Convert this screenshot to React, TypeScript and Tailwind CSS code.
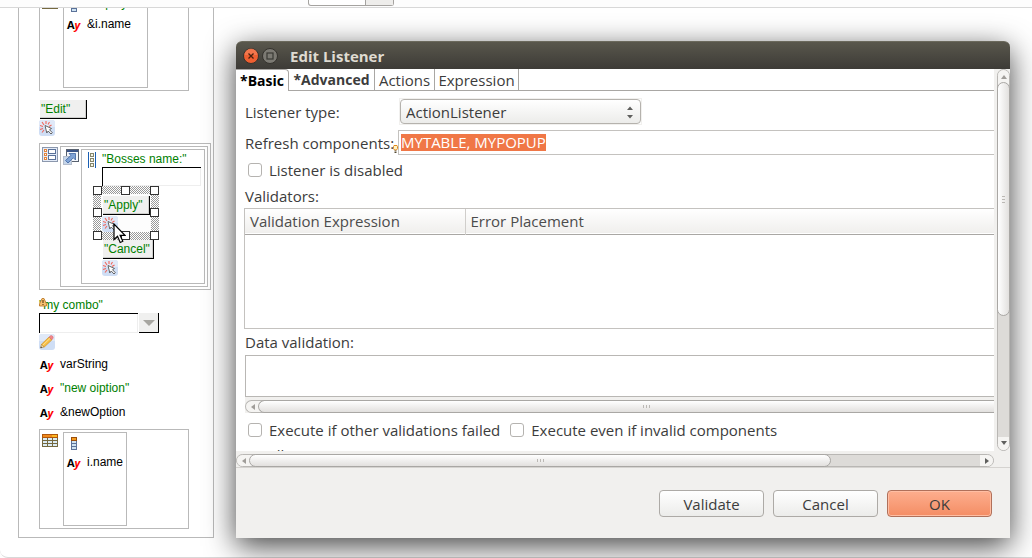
import React from "react";

const CANVAS_FONT = "font-['Liberation_Sans',Arial,sans-serif] text-[12px] leading-[15px]";
const DIALOG_FONT = "font-['Open_Sans','Noto_Sans',sans-serif] text-[15px] leading-[20px]";

/* ---------- icons ---------- */

const ActionIcon = () => (
  <svg width="16" height="16" viewBox="0 0 16 16" className="block shrink-0">
    <rect width="16" height="16" rx="3" fill="#cfdef5" />
    <path d="M0 3a3 3 0 0 1 3-3h10a3 3 0 0 1 3 3v4H0z" fill="#e0e9f8" />
    <path
      d="M7 1v3M3 2l2 3M10.500 2L9 4.500M1 5.500l3 1M12.500 5L10 6.500M1 9.500l3-1M3 12.500L5 10"
      stroke="#f0675c"
      strokeWidth="1.100"
      fill="none"
    />
    <path d="M6 5.500l6.500 3-2 1.200 2.800 3-1.300 1.300-2.800-3-1.400 2z" fill="#fff" stroke="#555" strokeWidth=".9" />
  </svg>
);

const PencilIcon = () => (
  <svg width="16" height="16" viewBox="0 0 16 16" className="block">
    <rect width="16" height="16" rx="3" fill="#cfdef5" />
    <path d="M0 3a3 3 0 0 1 3-3h10a3 3 0 0 1 3 3v4H0z" fill="#e0e9f8" />
    <path d="M1.500 14l1-3.800 2.800 2.800z" fill="#f4d9a8" stroke="#8a6a30" strokeWidth=".5" />
    <path d="M1.500 14l.5-1.600 1.200 1.200z" fill="#333" />
    <path d="M2.500 10.200L10 3l3 2.800L5.300 13z" fill="#f6bd45" stroke="#c98a20" strokeWidth=".6" />
    <path d="M3.800 11.300L11 4.400" stroke="#fde39a" strokeWidth="1" />
    <path d="M10 3l1.500-1.300q1-.6 2 .4 1 1 .6 2L13 5.800z" fill="#f2858a" stroke="#d0666c" strokeWidth=".5" />
  </svg>
);

const TableIcon = () => (
  <svg width="16" height="13" viewBox="0 0 16 13" className="block" shapeRendering="crispEdges">
    <rect width="16" height="13" fill="#75693f" />
    <rect width="16" height="4" fill="#b0560c" />
    <rect x="1" y="1" width="9" height="2" fill="#f08a1c" />
    <rect x="10" y="1" width="5" height="2" fill="#fbb823" />
    {[4, 7, 10].map((y) =>
      [1, 6, 11].map((x) => <rect key={`${x}-${y}`} x={x} y={y} width="4" height="2" fill="#dcecf5" />)
    )}
  </svg>
);

const ColumnIcon = () => (
  <svg width="6" height="13" viewBox="0 0 6 13" className="block" shapeRendering="crispEdges">
    <rect width="6" height="13" fill="#5b7299" />
    <rect width="6" height="4" fill="#9a4e0c" />
    <rect x="1" y="1" width="4" height="2" fill="#f59c1e" />
    {[4, 7, 10].map((y) => (
      <rect key={y} x="1" y={y} width="4" height="2" fill="#cfe3f2" />
    ))}
  </svg>
);

const FormIcon = () => (
  <svg width="16" height="15" viewBox="0 0 16 15" className="block" shapeRendering="crispEdges">
    <rect x=".5" y=".5" width="15" height="14" fill="#e3ebf8" stroke="#8c98ad" />
    {[2, 6, 10].map((y) => (
      <rect key={y} x="2.500" y={y + 0.5} width="2" height="2" fill="#fff" stroke="#e5843a" />
    ))}
    <rect x="6.500" y="2.500" width="7" height="4" fill="#fff" stroke="#5b7299" />
    <rect x="6.500" y="8.500" width="7" height="4" fill="#fff" stroke="#5b7299" />
  </svg>
);

const PopupIcon = () => (
  <svg width="16" height="16" viewBox="0 0 16 16" className="block">
    <rect x="3.500" y=".5" width="12" height="12" fill="#f4f7fc" stroke="#58616f" />
    <rect x="4" y="1" width="11" height="2" fill="#3a5488" />
    <rect x=".5" y="7.500" width="8" height="8" fill="#c5d5ea" stroke="#b3bccb" />
    <path d="M6 4.500h6.500V11l-2.200-2.200L5 14l-2.500-2.500L7.900 6.400z" fill="#7fa3d6" stroke="#3c639f" strokeWidth=".8" />
  </svg>
);

const LayoutIcon = () => (
  <svg width="8" height="16" viewBox="0 0 8 16" className="block" shapeRendering="crispEdges">
    <path d="M.5 0v16M7.500 0v16" stroke="#1a5fb4" />
    {[1, 6, 11].map((y) => (
      <rect key={y} x="2.500" y={y + 0.5} width="3" height="3" fill="#f4f4e6" stroke="#85866c" />
    ))}
  </svg>
);

const WarningIcon = () => (
  <svg width="8" height="9" viewBox="0 0 8 9" className="absolute left-0 top-0">
    <path d="M3 .5h2L7.500 6v2H.5V6z" fill="#f6c274" stroke="#b9721c" strokeWidth=".8" />
    <path d="M4 2v3M4 6v1" stroke="#4a2a00" strokeWidth="1" />
  </svg>
);

const BulbIcon = () => (
  <svg width="5" height="9" viewBox="0 0 5 9" className="absolute right-0 -bottom-px">
    <path d="M1 .5h3l.5 1v2L3.500 5h-2L.5 3.500v-2z" fill="#fff3c4" stroke="#e08a1e" />
    <path d="M1.500 6h2M1.500 7.500h2" stroke="#554a33" />
  </svg>
);

const CursorIcon = () => (
  <svg width="13" height="21" viewBox="0 0 13 21" className="absolute left-[20px] top-[37px]">
    <path d="M1 1v15.500l3.500-3.300 2.700 6.300 2.600-1.200-2.700-6H12z" fill="#fff" stroke="#000" strokeWidth="1.200" />
  </svg>
);

/* ---------- canvas pieces ---------- */

const Ay = () => (
  <span className="w-5 shrink-0 font-['Open_Sans',sans-serif] text-[11px] leading-[13px] font-bold text-black">
    A<i className="text-[#ff0000]">y</i>
  </span>
);

const TextRow = ({ text, green = false }: { text: string; green?: boolean }) => (
  <div className="flex h-6 items-center pl-px">
    <Ay />
    <span className={green ? "text-[#008000]" : "text-black"}>{text}</span>
  </div>
);

const CanvasButton = ({ label, className }: { label: string; className: string }) => (
  <div className="flex flex-col gap-px">
    <button
      className={`ml-px block h-[19px] border-r border-b border-black bg-[#f0f0ef] pl-px text-left text-[#008000] shadow-[inset_-1px_-1px_0_#cfcfcd] ${className}`}
    >
      {label}
    </button>
    <ActionIcon />
  </div>
);

const TableBox = ({ text, header, wide = false }: { text: string; header?: string; wide?: boolean }) => (
  <div className="flex h-[100px] w-[150px] gap-[5px] border border-[#b9b9b9] p-[2px]">
    <div className="pt-[2px]">
      <TableIcon />
    </div>
    <div className={`border border-[#b9b9b9] pl-[2px] pt-1 ${wide ? "w-[85px]" : "w-16"}`}>
      <div className="flex h-[13px] gap-[6px] pl-[5px]">
        <ColumnIcon />
        {header && <span className="leading-[9px] text-[#008000]">{header}</span>}
      </div>
      <TextRow text={text} />
    </div>
  </div>
);

const handles = [
  "left-0 top-0",
  "left-[28px] top-0",
  "right-0 top-0",
  "left-0 top-[22px]",
  "right-0 top-[22px]",
  "left-0 bottom-0",
  "left-[28px] bottom-0",
  "right-0 bottom-0",
];

const Selection = ({ children }: { children: React.ReactNode }) => (
  <div className="relative -ml-[9px] h-[54px] w-[66px] bg-[repeating-conic-gradient(#999_0_25%,#fff_0_50%)] bg-[length:2px_2px] p-2">
    <div className="h-full bg-[#fdfdfd] pl-px pt-[2px]">{children}</div>
    {handles.map((place) => (
      <span key={place} className={`absolute size-[9px] border border-[#333] bg-white ${place}`} />
    ))}
    <CursorIcon />
  </div>
);

const Canvas = () => (
  <div className={`flex-1 overflow-hidden rounded-bl-lg border-t border-b border-[#d8d8d8] bg-white pb-[19px] ${CANVAS_FONT}`}>
    <div className="ml-[18px] flex w-[196px] flex-col border-x border-b border-[#b9b9b9] pb-2 pl-5">
      <div className="-mt-[17px]">
        <TableBox text="&i.name" header={'"Employee"'} wide />
      </div>
      <div className="mt-[9px]">
        <CanvasButton label={'"Edit"'} className="w-[47px]" />
      </div>

      {/* popup with a form */}
      <div className="mt-[7px] flex h-[147px] w-[172px] gap-[2px] border border-[#b9b9b9] p-[2px]">
        <div className="pt-px">
          <FormIcon />
        </div>
        <div className="flex flex-1 gap-[2px] border border-[#b9b9b9] p-[2px]">
          <PopupIcon />
          <div className="flex flex-1 gap-[6px] border border-[#b9b9b9] pl-[6px] pt-[2px]">
            <LayoutIcon />
            <div className="flex flex-1 flex-col items-start">
              <label htmlFor="bosses" className="text-[#008000]">
                "Bosses name:"
              </label>
              <input
                id="bosses"
                className="h-[19px] w-[99px] border-t border-l border-black bg-white shadow-[inset_-1px_-1px_0_#eee]"
              />
              <Selection>
                <CanvasButton label={'"Apply"'} className="w-[47px]" />
              </Selection>
              <CanvasButton label={'"Cancel"'} className="w-[51px]" />
            </div>
          </div>
        </div>
      </div>

      {/* combo */}
      <div className="relative mt-2">
        <label htmlFor="combo" className="block text-[#008000]">
          "my combo"
        </label>
        <WarningIcon />
      </div>
      <div className="mb-px flex gap-px">
        <input id="combo" className="h-5 w-[99px] border-t border-l border-black bg-white shadow-[inset_-1px_-1px_0_#eee]" />
        <button aria-label="Open combo" className="flex h-5 w-5 items-center justify-center border-r border-b border-black bg-[#f0f0ef]">
          <svg width="12" height="6" viewBox="0 0 12 6">
            <path d="M0 0h12L6 6z" fill="#a7a6a1" />
          </svg>
        </button>
      </div>
      <PencilIcon />

      <div className="mt-[2px] mb-[5px]">
        <TextRow text="varString" />
        <TextRow text={'"new oiption"'} green />
        <TextRow text="&newOption" />
      </div>
      <TableBox text="i.name" />
    </div>
  </div>
);

/* ---------- dialog pieces ---------- */

const Grip = ({ vertical = false }: { vertical?: boolean }) => (
  <span className={`flex gap-[2px] ${vertical ? "flex-col" : ""}`}>
    {[0, 1, 2].map((i) => (
      <i key={i} className={`bg-[#bbb8b4] ${vertical ? "h-px w-[3px]" : "h-[3px] w-px"}`} />
    ))}
  </span>
);

const Arrow = ({ d, dark = false }: { d: string; dark?: boolean }) => (
  <svg width="6" height="6" viewBox="0 0 6 6" className="shrink-0">
    <path d={d} fill={dark ? "#5f5f5d" : "#a09d99"} />
  </svg>
);

const Check = ({ id, label }: { id: string; label: string }) => (
  <div className="flex items-center gap-[7px]">
    <input
      id={id}
      type="checkbox"
      className="size-[14px] appearance-none rounded-[3px] border border-[#b5b3b0] bg-white"
    />
    <label htmlFor={id}>{label}</label>
  </div>
);

const tabs = [
  { label: "*Basic", className: "w-[53px] rounded-tr-sm border-t border-r border-[#a9a7a4] text-[14px] font-bold text-black" },
  { label: "*Advanced", className: "w-[86px] border-r border-b border-[#a9a7a4] text-[14px] font-bold" },
  { label: "Actions", className: "w-[60px] border-r border-b border-[#a9a7a4]" },
  { label: "Expression", className: "w-[84px] border-r border-b border-[#a9a7a4]" },
];

const ListenerForm = () => (
  <div className="min-w-0 flex-1 overflow-hidden bg-white">
    <div className="flex h-[22px]" role="tablist">
      {tabs.map((tab) => (
        <button key={tab.label} role="tab" className={`flex items-center justify-center whitespace-nowrap ${tab.className}`}>
          {tab.label}
        </button>
      ))}
      <div className="flex-1 border-b border-[#a9a7a4]" />
    </div>

    <div className="mt-2 grid grid-cols-[153px_1fr] items-center gap-y-[6px] pl-[9px]">
      <label htmlFor="type">Listener type:</label>
      <div className="relative ml-[2px] h-[25px] w-[241px] bg-white shadow-[0_0_0_1px_#f1f0ee]">
        <select
          id="type"
          className="h-full w-full appearance-none rounded-[4px] border border-[#b5b2ad] bg-linear-to-b from-white to-[#ececea] pl-[5px]"
        >
          <option>ActionListener</option>
        </select>
        <svg width="6" height="13" viewBox="0 0 6 13" className="pointer-events-none absolute top-[7px] right-[8px]">
          <path d="M0 4l3-3.500L6 4zM0 9l3 3.500L6 9z" fill="#5f5f5d" />
        </svg>
      </div>
      <div className="relative flex items-center">
        <label htmlFor="refresh">Refresh components:</label>
        <BulbIcon />
      </div>
      <div className="flex h-[25px] items-center border-y border-l border-[#c4c2bf] pl-[2px]">
        <input
          id="refresh"
          defaultValue="MYTABLE, MYPOPUP"
          className="h-[17px] [field-sizing:content] bg-[#f07746] leading-[17px] text-white outline-none"
        />
      </div>
    </div>

    <div className="mt-[5px] pl-3">
      <Check id="disabled" label="Listener is disabled" />
    </div>

    <h3 className="mt-[6px] mb-[2px] pl-[9px]">Validators:</h3>
    <div className="ml-2 h-[121px] border-y border-l border-[#c4c2bf]">
      <table className="w-full table-fixed border-collapse">
        <thead>
          <tr className="h-[25px] border-b border-[#a9a7a4] bg-linear-to-b from-white to-[#f0efed] text-left text-[#4c4c4c]">
            <th className="w-[220px] border-r border-[#d0cecb] py-0 pl-[5px] font-normal">Validation Expression</th>
            <th className="py-0 pl-[5px] font-normal">Error Placement</th>
          </tr>
        </thead>
        <tbody />
      </table>
    </div>

    <div className="pl-[9px]">
      <label htmlFor="validation" className="mt-[3px] mb-[3px] block">
        Data validation:
      </label>
      <textarea id="validation" className="block h-[42px] w-full resize-none border-y border-l border-[#b9b7b4]" />
      <div className="flex h-4 items-end bg-[#f1f0ee]">
        <div className="flex h-[13px] w-full items-center rounded-l-full border-y border-l border-[#b9b7b4] bg-[#f5f4f2] pl-1">
          <Arrow d="M5 0v6L1 3z" />
          <div className="-my-px ml-[2px] flex h-[13px] flex-1 items-center justify-center rounded-l-full border-y border-l border-[#a9a7a4] bg-linear-to-b from-white to-[#e2e0de] pl-10">
            <Grip />
          </div>
        </div>
      </div>
    </div>

    <div className="mt-[7px] flex gap-[10px] pl-3">
      <Check id="failed" label="Execute if other validations failed" />
      <Check id="invalid" label="Execute even if invalid components" />
    </div>
    <label className="mt-[5px] block pl-[9px]">JS call expressions:</label>
  </div>
);

const DialogButton = ({ label, primary = false }: { label: string; primary?: boolean }) => (
  <button
    className={`h-[27px] w-[105px] rounded-[4px] border ${
      primary
        ? "border-[#b0705a] bg-linear-to-b from-[#fdae8e] to-[#f48d64] shadow-[inset_0_0_0_1px_#ffbea3]"
        : "border-[#adaaa6] bg-linear-to-b from-white to-[#ececea]"
    }`}
  >
    {label}
  </button>
);

const EditListenerDialog = () => (
  <div
    role="dialog"
    aria-label="Edit Listener"
    className={`absolute top-[41px] right-[22px] bottom-5 left-[236px] flex flex-col rounded-t-[6px] bg-[#f1f0ee] text-[#3c3c3c] shadow-[0_8px_30px_rgba(0,0,0,0.74)] ${DIALOG_FONT}`}
  >
    <div className="flex h-7 shrink-0 items-center rounded-t-[6px] border-t border-[#6b695c] bg-linear-to-b from-[#59574c] to-[#3d3b37] pl-[7px]">
      <button aria-label="Close" className="size-4">
        <svg width="16" height="16" viewBox="0 0 16 16">
          <circle cx="8" cy="8" r="7.500" fill="#ee5f31" stroke="#34322d" />
          <path d="M1.500 7a6.500 6.500 0 0 1 13 0z" fill="#f58058" opacity=".7" />
          <path d="M5.500 5.500l5 5m0-5l-5 5" stroke="#47200f" strokeWidth="1.300" />
        </svg>
      </button>
      <button aria-label="Maximize" className="ml-[3px] size-4">
        <svg width="16" height="16" viewBox="0 0 16 16">
          <circle cx="8" cy="8" r="7.500" fill="#7c7a73" stroke="#34322d" />
          <rect x="5" y="5" width="6" height="6" fill="none" stroke="#3a3934" strokeWidth="1.200" />
        </svg>
      </button>
      <h2 className="ml-3 font-bold text-[#dfdbd2]">Edit Listener</h2>
    </div>

    <div className="flex min-h-0 flex-1">
      <ListenerForm />
      <div className="ml-[3px] flex w-[13px] flex-col items-center rounded-full border border-[#b9b7b4] bg-[#dddbd8]">
        <div className="flex h-[18px] w-full shrink-0 justify-center rounded-t-full bg-[#f5f4f2] pt-1">
          <Arrow d="M0 5h6L3 1z" />
        </div>
        <div className="-mt-[6px] flex h-[234px] w-[13px] items-center justify-center rounded-full border border-[#a9a7a4] bg-linear-to-r from-white to-[#e2e0de]">
          <Grip vertical />
        </div>
        <div className="mt-auto flex h-[13px] w-full justify-center rounded-b-full bg-[#f5f4f2] pt-[3px]">
          <Arrow d="M0 1h6L3 5z" dark />
        </div>
      </div>
    </div>

    <div className="mt-[3px] mr-4 flex h-[13px] shrink-0 items-center rounded-full border border-[#b9b7b4] bg-[#dddbd8]">
      <div className="flex h-full w-5 items-center rounded-l-full bg-[#f5f4f2] pl-1">
        <Arrow d="M5 0v6L1 3z" />
      </div>
      <div className="-ml-2 flex h-[13px] w-[77%] items-center justify-center rounded-full border border-[#a9a7a4] bg-linear-to-b from-white to-[#e2e0de]">
        <Grip />
      </div>
      <div className="ml-auto flex h-full w-[13px] items-center justify-center rounded-r-full bg-[#f5f4f2]">
        <Arrow d="M1 0v6l4-3z" dark />
      </div>
    </div>

    <div className="flex shrink-0 justify-end gap-[9px] border-t border-[#d5d3d0] pt-[22px] pr-[18px] pb-[21px]">
      <DialogButton label="Validate" />
      <DialogButton label="Cancel" />
      <DialogButton label="OK" primary />
    </div>
  </div>
);

export default function App() {
  return (
    <div className="relative flex h-screen flex-col overflow-hidden bg-[#fdfdfd]">
      <div className="h-[7px] shrink-0 pl-[308px]">
        <div className="flex h-[6px] w-[86px] rounded-b-[3px] border-x border-b border-[#a5a3a0] bg-white">
          <div className="ml-auto w-7 border-l border-[#a5a3a0] bg-[#eeedeb]" />
        </div>
      </div>
      <Canvas />
      <EditListenerDialog />
    </div>
  );
}
